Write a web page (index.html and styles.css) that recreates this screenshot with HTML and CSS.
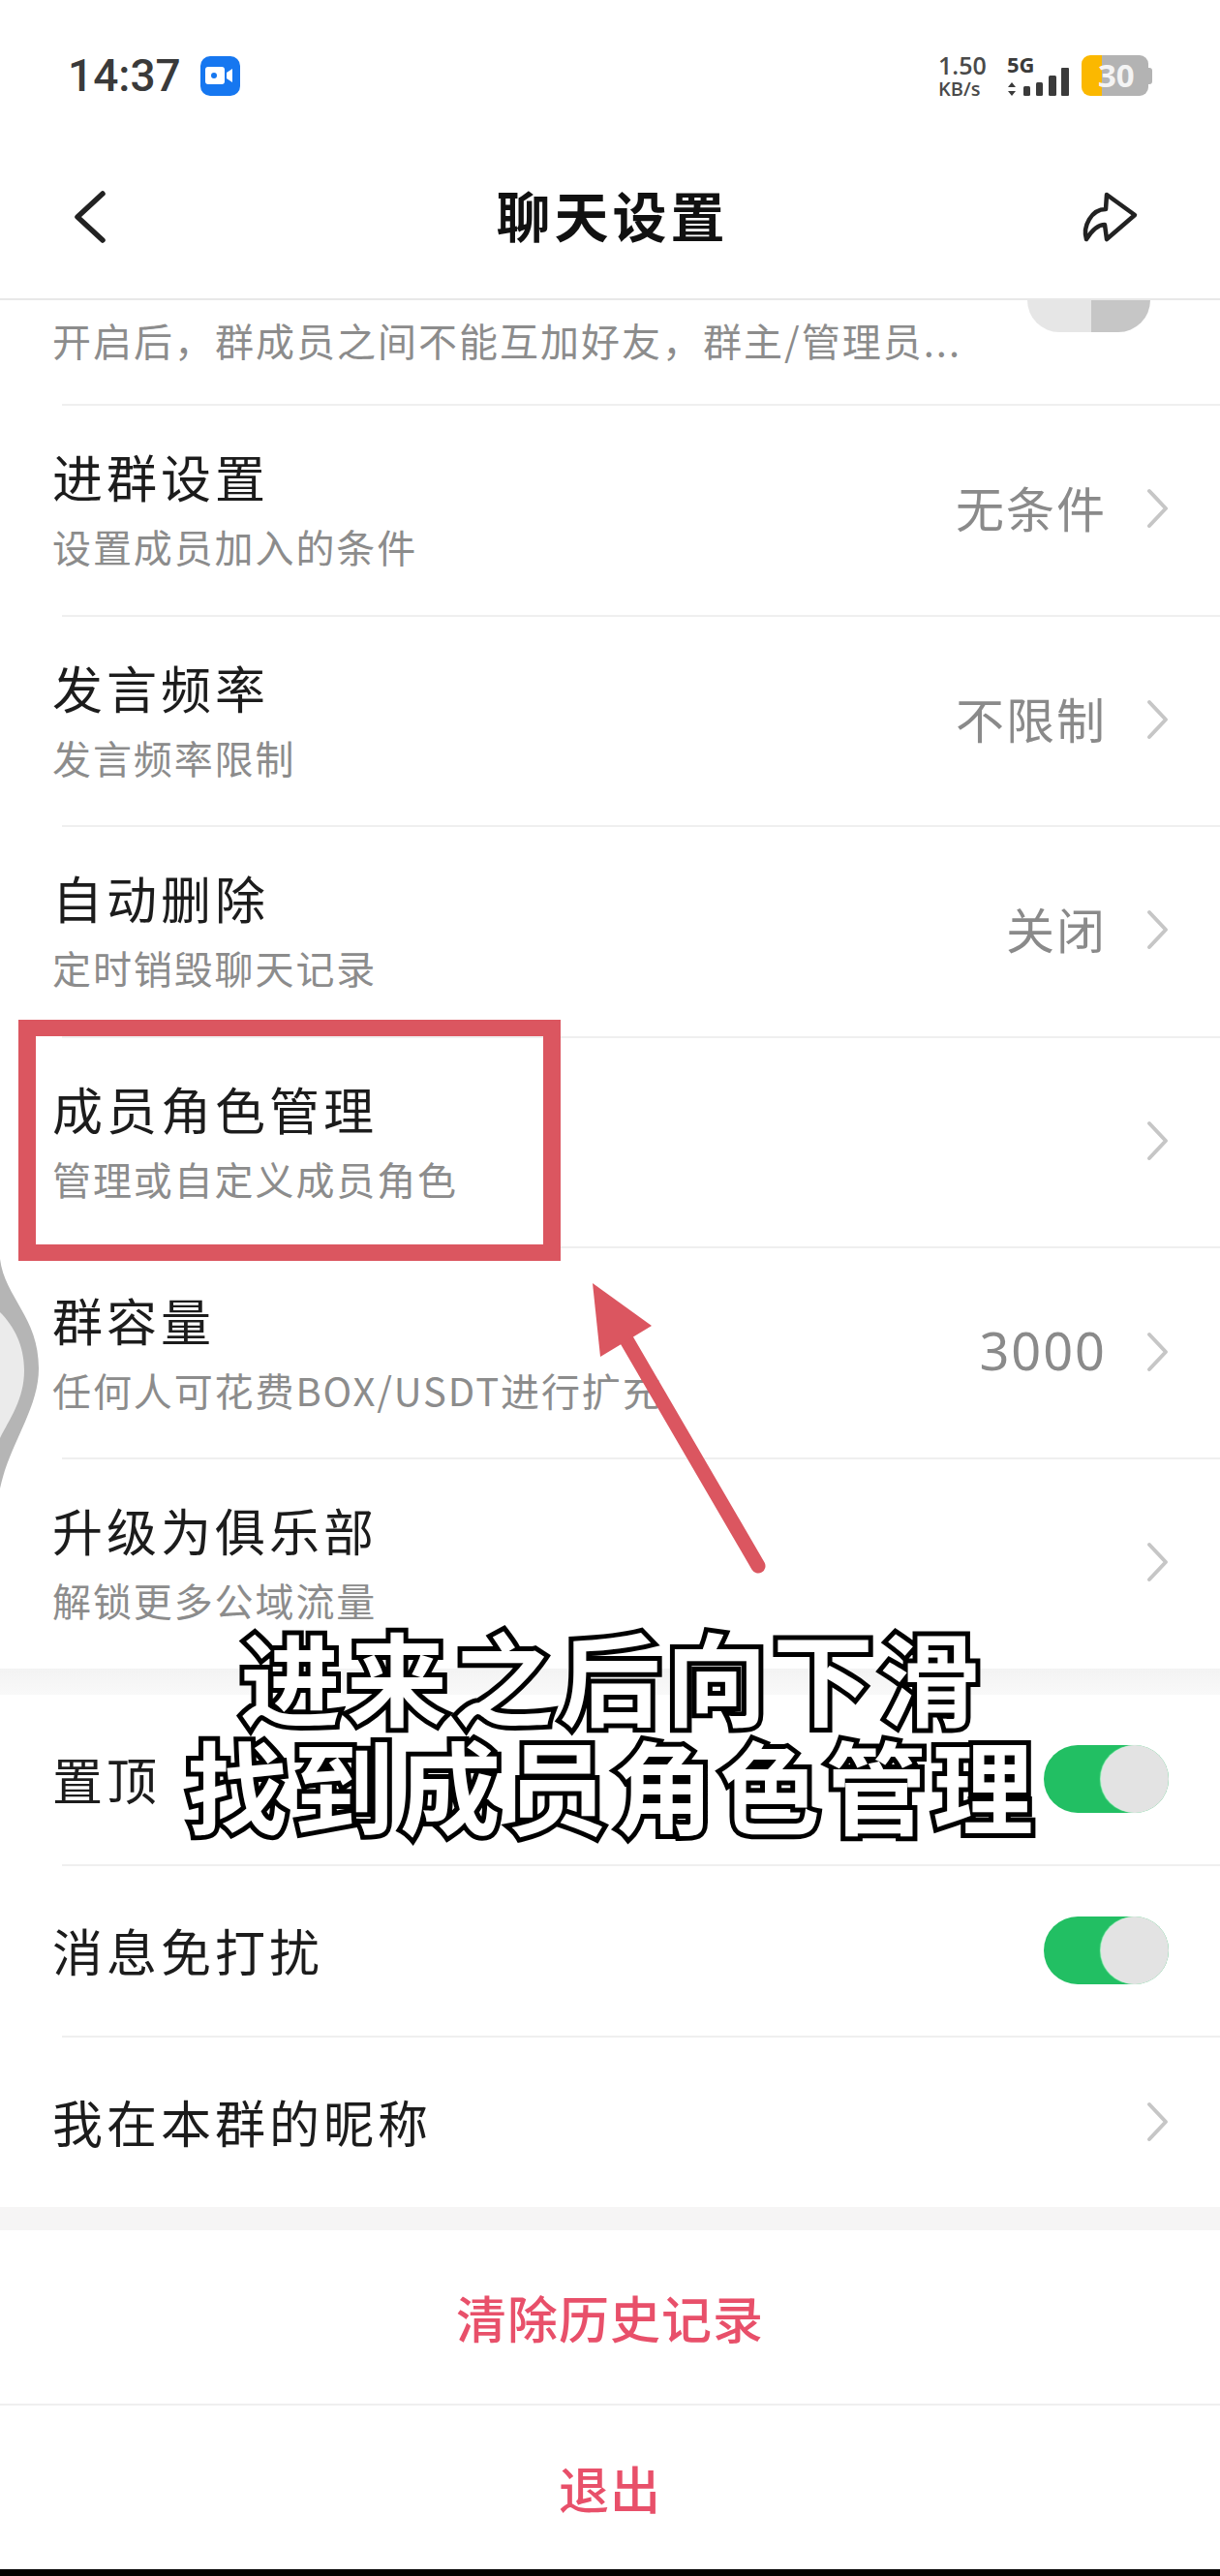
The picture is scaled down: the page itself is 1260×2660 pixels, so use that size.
FILE: index.html
```html
<!DOCTYPE html>
<html lang="zh-CN">
<head>
    <meta charset="UTF-8">
    <meta name="viewport" content="width=device-width, initial-scale=1.0">
    <title>聊天设置</title>
    <link rel="stylesheet" href="styles.css">
</head>
<body>
<div class="phone">
    <div class="status-bar">
        <div class="status-left">
            <span class="clock">14:37</span>
            <span class="cam-badge">
                <svg width="30" height="20" viewBox="0 0 30 20"><rect x="0" y="1" width="20" height="18" rx="3" fill="#fff"/><circle cx="9" cy="10" r="3" fill="#1677f0"/><path d="M22 7l6-4v14l-6-4z" fill="#fff"/></svg>
            </span>
        </div>
        <div class="status-right">
            <div class="speed"><span class="speed-num">1.50</span><span class="speed-unit">KB/s</span></div>
            <div class="signal">
                <span class="net">5G</span>
                <svg class="bars" width="64" height="30" viewBox="0 0 64 30" fill="#3b3b3b">
                    <path d="M5 16l4 5H1zM5 30l-4-5h8z"/>
                    <rect x="17" y="20" width="7" height="10" rx="1.5"/>
                    <rect x="30" y="16" width="7" height="14" rx="1.5"/>
                    <rect x="43" y="9" width="8" height="21" rx="1.5"/>
                    <rect x="56" y="1" width="8" height="29" rx="1"/>
                </svg>
            </div>
            <div class="battery"><span class="battery-num">30</span></div>
        </div>
    </div>

    <div class="top-bar">
        <svg class="back" width="40" height="60" viewBox="0 0 40 60"><path d="M33 6L7 30l26 24" fill="none" stroke="#222" stroke-width="5.5" stroke-linecap="round" stroke-linejoin="round"/></svg>
        <h1 class="page-title">聊天设置</h1>
        <svg class="share" width="64" height="60" viewBox="0 0 64 60"><path d="M28 7L57 28 28 53 26 38C18 38 12 45 7 53 3 40 12 22 27 22Z" fill="none" stroke="#222" stroke-width="4.5" stroke-linejoin="round"/></svg>
    </div>

    <div class="row row-cut">
        <div class="row-text"><div class="row-sub">开启后，群成员之间不能互加好友，群主/管理员...</div></div>
        <span class="toggle-cut"></span>
    </div>
    <div class="line"></div>

    <div class="row">
        <div class="row-text"><div class="row-title">进群设置</div><div class="row-sub">设置成员加入的条件</div></div>
        <span class="row-value">无条件</span>
        <svg class="chev" width="23" height="42" viewBox="0 0 23 42"><path d="M3 3l17 18L3 39"/></svg>
    </div>
    <div class="line"></div>

    <div class="row">
        <div class="row-text"><div class="row-title">发言频率</div><div class="row-sub">发言频率限制</div></div>
        <span class="row-value">不限制</span>
        <svg class="chev" width="23" height="42" viewBox="0 0 23 42"><path d="M3 3l17 18L3 39"/></svg>
    </div>
    <div class="line"></div>

    <div class="row">
        <div class="row-text"><div class="row-title">自动删除</div><div class="row-sub">定时销毁聊天记录</div></div>
        <span class="row-value">关闭</span>
        <svg class="chev" width="23" height="42" viewBox="0 0 23 42"><path d="M3 3l17 18L3 39"/></svg>
    </div>
    <div class="line"></div>

    <div class="row">
        <div class="row-text"><div class="row-title">成员角色管理</div><div class="row-sub">管理或自定义成员角色</div></div>
        <svg class="chev" width="23" height="42" viewBox="0 0 23 42"><path d="M3 3l17 18L3 39"/></svg>
    </div>
    <div class="line"></div>

    <div class="row">
        <div class="row-text"><div class="row-title">群容量</div><div class="row-sub">任何人可花费BOX/USDT进行扩充</div></div>
        <span class="row-value row-num">3000</span>
        <svg class="chev" width="23" height="42" viewBox="0 0 23 42"><path d="M3 3l17 18L3 39"/></svg>
    </div>
    <div class="line"></div>

    <div class="row">
        <div class="row-text"><div class="row-title">升级为俱乐部</div><div class="row-sub">解锁更多公域流量</div></div>
        <svg class="chev" width="23" height="42" viewBox="0 0 23 42"><path d="M3 3l17 18L3 39"/></svg>
    </div>

    <div class="gap"></div>

    <div class="row row-small">
        <div class="row-title">置顶</div>
        <span class="toggle"></span>
    </div>
    <div class="line"></div>
    <div class="row row-small">
        <div class="row-title">消息免打扰</div>
        <span class="toggle"></span>
    </div>
    <div class="line"></div>
    <div class="row row-small">
        <div class="row-title">我在本群的昵称</div>
        <svg class="chev" width="23" height="42" viewBox="0 0 23 42"><path d="M3 3l17 18L3 39"/></svg>
    </div>

    <div class="gap gap-2"></div>

    <div class="action">清除历史记录</div>
    <div class="line line-full"></div>
    <div class="action action-last">退出</div>
    <div class="home-edge"></div>

    <!-- annotations on top of the recording -->
    <div class="mark-box"></div>
    <svg class="overlay-art" width="1260" height="2660" viewBox="0 0 1260 2660">
        <path d="M0 1300C5 1340 40 1360 40 1413 40 1455 10 1490 0 1537Z" fill="#b5b5b5"/>
        <path d="M0 1355C15 1370 25 1390 25 1415 25 1445 10 1465 0 1485Z" fill="#ebebeb"/>
        <path d="M783 1617L645 1380" stroke="#db5660" stroke-width="15" stroke-linecap="round" fill="none"/>
        <path d="M612 1325L673 1369 620 1401Z" fill="#db5660"/>
    </svg>
    <div class="caption">
        <div>进来之后向下滑</div>
        <div>找到成员角色管理</div>
    </div>
</div>
</body>
</html>
```

FILE: styles.css
```css
* {
    box-sizing: border-box;
}

body {
    margin: 0;
    background-color: #fff;
    font-family: "Noto Sans CJK SC", "Noto Sans", sans-serif;
}

.phone {
    position: relative;
    width: 1260px;
    height: 2660px;
    overflow: hidden;
    background-color: #fff;
}

/* status bar */
.status-bar {
    height: 140px;
    padding: 57px 74px 0 70px;
    display: flex;
    justify-content: space-between;
    align-items: flex-start;
}

.status-left {
    display: flex;
    align-items: center;
    gap: 20px;
}

.clock {
    font-family: Roboto, sans-serif;
    font-size: 46px;
    font-weight: 500;
    line-height: 42px;
    color: #3a3a3a;
}

.cam-badge {
    width: 41px;
    height: 41px;
    border-radius: 10px;
    background-color: #1677f0;
    display: flex;
    align-items: center;
    justify-content: center;
}

.status-right {
    display: flex;
    align-items: flex-start;
    gap: 0;
}

.speed {
    width: 71px;
    display: flex;
    flex-direction: column;
    font-family: "Open Sans", sans-serif;
    font-weight: 600;
    color: #4a4a4a;
}

.speed-num {
    font-size: 25px;
    line-height: 20px;
}

.speed-unit {
    font-size: 20px;
    line-height: 22px;
    margin-top: 4px;
}

.signal {
    width: 77px;
    position: relative;
    height: 42px;
}

.net {
    display: block;
    font-family: "Open Sans", sans-serif;
    font-size: 22px;
    font-weight: 700;
    line-height: 18px;
    color: #3b3b3b;
}

.bars {
    position: absolute;
    left: 0;
    top: 12px;
}

.battery {
    width: 69px;
    height: 42px;
    border-radius: 9px;
    background: linear-gradient(to right, #fbb800 21px, #b3b3b3 21px);
    position: relative;
    display: flex;
    align-items: center;
    padding-left: 17px;
}

.battery::after {
    content: "";
    position: absolute;
    right: -4px;
    top: 13px;
    width: 4px;
    height: 17px;
    border-radius: 0 3px 3px 0;
    background-color: #b3b3b3;
}

.battery-num {
    font-family: "Open Sans", sans-serif;
    font-size: 33px;
    font-weight: 700;
    line-height: 42px;
    color: #f4f4f4;
}

/* title bar */
.top-bar {
    height: 170px;
    padding: 0 81px 0 73px;
    border-bottom: 2px solid #e8e8e8;
    display: flex;
    align-items: center;
    justify-content: space-between;
    position: relative;
}

.page-title {
    position: absolute;
    left: 0;
    right: 0;
    margin: -6px 0 0;
    padding-left: 5px;
    text-align: center;
    font-size: 56px;
    font-weight: 700;
    letter-spacing: 4px;
    color: #111;
    line-height: 80px;
}

/* settings rows */
.row {
    height: 215.6px;
    padding: 0 53px 3px 54px;
    display: flex;
    align-items: center;
}

.row-cut {
    height: 107px;
    padding-bottom: 26px;
    padding-right: 72px;
}

.row-small {
    height: 175px;
    padding-bottom: 0;
    justify-content: space-between;
}

.row-text {
    flex: 1;
    display: flex;
    flex-direction: column;
    gap: 12px;
}

.row-title {
    font-size: 52px;
    letter-spacing: 4px;
    line-height: 66px;
    color: #1c1c1c;
}

.row-sub {
    font-size: 40px;
    letter-spacing: 1.9px;
    line-height: 54px;
    color: #8c8c8c;
    white-space: nowrap;
}

.row-cut .row-sub {
    letter-spacing: 2px;
}

.row-value {
    font-size: 50px;
    letter-spacing: 2px;
    color: #8a8a8a;
    margin: 0 41px 4px 0;
}

.row-num {
    font-family: "Noto Sans", sans-serif;
    font-size: 54px;
}

.chev {
    fill: none;
    stroke: #c6c6c6;
    stroke-width: 4;
    stroke-linecap: round;
    stroke-linejoin: round;
}

.toggle-cut {
    align-self: flex-start;
    width: 127px;
    height: 33px;
    margin-left: auto;
    border-radius: 0 0 34px 34px;
    background: linear-gradient(to right, #e6e6e6 52%, #c6c6c6 52%);
}

.toggle {
    width: 129px;
    height: 70px;
    border-radius: 35px;
    background-color: #22bf63;
    position: relative;
}

.toggle::after {
    content: "";
    position: absolute;
    right: 0;
    top: 0;
    width: 70px;
    height: 70px;
    border-radius: 50%;
    background-color: #e3e3e3;
    box-shadow: -1px 0 1px #b9f5cf;
}

.line {
    height: 2px;
    margin-left: 64px;
    background-color: #efefef;
}

.line-full {
    margin-left: 0;
}

.gap {
    height: 27px;
    background: linear-gradient(#f3f3f3, #f9f9f9);
}

.gap-2 {
    height: 24px;
    background: #f6f5f5;
}

.action {
    height: 179px;
    display: flex;
    align-items: center;
    justify-content: center;
    font-size: 52px;
    font-weight: 500;
    letter-spacing: 1px;
    color: #e8506a;
}

.action-last {
    height: 169px;
}

.home-edge {
    height: 7px;
    background-color: #000;
}

/* red annotations and subtitle over the recording */
.mark-box {
    position: absolute;
    left: 19px;
    top: 1053px;
    width: 560px;
    height: 249px;
    border: 17px solid #db5660;
    border-width: 17px 18px;
}

.overlay-art {
    position: absolute;
    left: 0;
    top: 0;
    pointer-events: none;
}

.caption {
    position: absolute;
    left: 6px;
    right: 0;
    top: 1674px;
    text-align: center;
    font-size: 104px;
    font-weight: 700;
    line-height: 112px;
    letter-spacing: 6px;
    color: #fff;
    -webkit-text-stroke: 10px #000;
    paint-order: stroke fill;
    white-space: nowrap;
}
```
